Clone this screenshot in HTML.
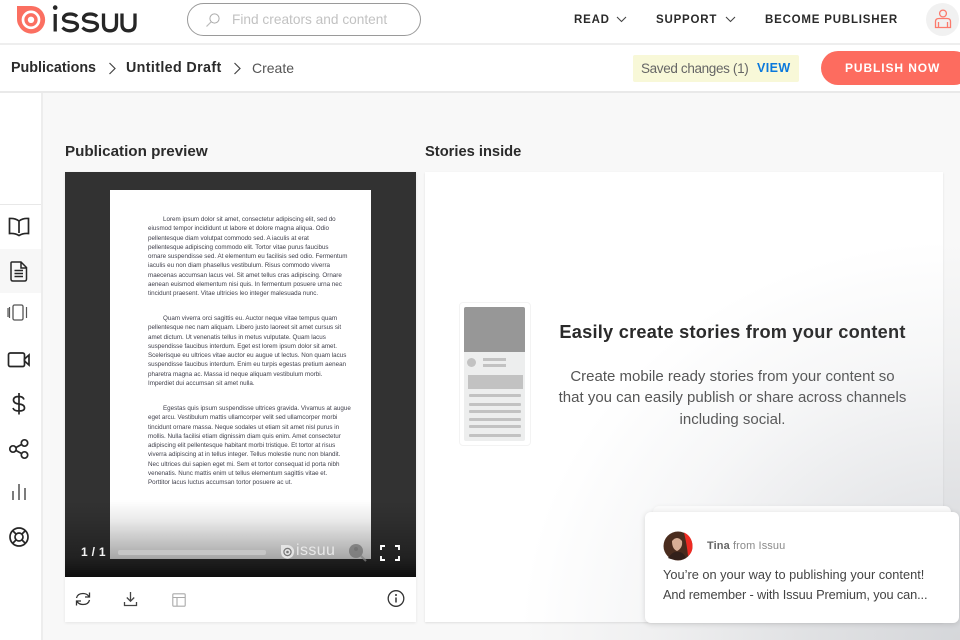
<!DOCTYPE html>
<html><head><meta charset="utf-8"><style>
html,body{margin:0;padding:0}
body{width:960px;height:640px;position:relative;overflow:hidden;background:#f8f8f8;font-family:"Liberation Sans",sans-serif;color:#222}
.a{position:absolute;white-space:nowrap}
.box{position:absolute}
svg{position:absolute;overflow:visible}
.d{position:absolute;white-space:nowrap;font-family:"Liberation Sans",sans-serif;font-size:6.25px;line-height:9px;color:#3e3e4a}
.n{font-size:11.5px;line-height:14px;font-weight:bold;letter-spacing:.8px;color:#2a2a2a;top:13px}
.l{position:absolute;left:469px;width:52px;height:3px;background:#c2c2c2;border-radius:1px}
</style></head><body>

<!-- header -->
<div class="box" style="left:0;top:0;width:960px;height:43px;background:#fff;border-bottom:2px solid #eeeeee"></div>
<div class="box" style="left:0;top:45px;width:960px;height:46px;background:#fff;border-bottom:2px solid #e9e9e9"></div>

<svg style="left:16px;top:5px" width="30" height="29" viewBox="0 0 30 29">
<path d="M1 1H15A13.800 13.800 0 1 1 3 21Q1 18 1 14Z" fill="#fb6f61"/>
<circle cx="15" cy="14.800" r="8" fill="none" stroke="#fff" stroke-width="2.700"/>
<circle cx="15" cy="14.800" r="3.200" fill="#fff"/>
</svg>
<svg style="left:52px;top:4px" width="88" height="30" viewBox="0 0 88 30" fill="none" stroke="#262626" stroke-width="3.300">
<circle cx="3.200" cy="3.600" r="2.300" fill="#262626" stroke="none"/>
<path d="M3.200 10V27.500"/>
<path d="M25 12.500C23 10.500 20 10 18 10C14 10 11.500 12 11.500 14.500C11.500 20 25.500 16 25.500 22C25.500 25 22 26.800 18 26.800C15 26.800 12.500 25.500 10.500 23.500"/>
<path d="M45 12.500C43 10.500 40 10 38 10C34 10 31.500 12 31.500 14.500C31.500 20 45.500 16 45.500 22C45.500 25 42 26.800 38 26.800C35 26.800 32.500 25.500 30.500 23.500"/>
<path d="M51.500 9.500V20C51.500 24.800 54 26.800 58 26.800C62 26.800 64.500 24.800 64.500 20V9.500"/>
<path d="M70 9.500V20C70 24.800 72.500 26.800 76.500 26.800C80.500 26.800 83 24.800 83 20V9.500"/>
</svg>

<div class="box" style="left:187px;top:3px;width:232px;height:31px;border:1.300px solid #9a9a9a;border-radius:17px;background:#fff"></div>
<svg style="left:205px;top:12px" width="16" height="16" viewBox="0 0 16 16"><circle cx="9.500" cy="6.500" r="4.600" fill="none" stroke="#aaa" stroke-width="1"/><path d="M6 10L1.500 14.500" stroke="#bbb" stroke-width="1.200"/></svg>
<div class="a" style="left:232px;top:12px;font-size:13.700px;line-height:16px;color:#c2c2c2">Find creators and content</div>

<div class="a n" style="left:574px">READ</div>
<svg style="left:616px;top:16px" width="11" height="7"><path d="M1 1L5.500 5.500L10 1" fill="none" stroke="#444" stroke-width="1.100"/></svg>
<div class="a n" style="left:656px">SUPPORT</div>
<svg style="left:725px;top:16px" width="11" height="7"><path d="M1 1L5.500 5.500L10 1" fill="none" stroke="#444" stroke-width="1.100"/></svg>
<div class="a n" style="left:765px">BECOME PUBLISHER</div>
<div class="box" style="left:926px;top:3px;width:33px;height:33px;border-radius:50%;background:#f1f1f1"></div>
<svg style="left:934px;top:9px" width="18" height="20" viewBox="0 0 18 20"><circle cx="9" cy="4.500" r="3.400" fill="none" stroke="#fb7a6c" stroke-width="1.300"/><path d="M1.500 18.500V12.500Q1.500 9.500 5 9.500H13Q16.500 9.500 16.500 12.500V18.500ZM4.500 18.500V13M13.500 18.500V13" fill="none" stroke="#fb7a6c" stroke-width="1.300"/></svg>

<!-- breadcrumb -->
<div class="a" style="left:11px;top:59px;font-size:14.300px;line-height:18px;font-weight:bold;color:#2b2b2b">Publications</div>
<svg style="left:108px;top:62px" width="9" height="13"><path d="M1.500 1L7 6.500L1.500 12" fill="none" stroke="#444" stroke-width="1.200"/></svg>
<div class="a" style="left:126px;top:59px;font-size:14.300px;line-height:18px;font-weight:bold;letter-spacing:.36px;color:#2b2b2b">Untitled Draft</div>
<svg style="left:233px;top:62px" width="9" height="13"><path d="M1.500 1L7 6.500L1.500 12" fill="none" stroke="#444" stroke-width="1.200"/></svg>
<div class="a" style="left:252px;top:59px;font-size:14px;line-height:18px;color:#555">Create</div>

<div class="box" style="left:633px;top:55px;width:166px;height:27px;background:#f8f8d8;border-radius:2px"></div>
<div class="a" style="left:641px;top:60px;font-size:13.500px;line-height:17px;letter-spacing:-.35px;color:#666">Saved changes (1)</div>
<div class="a" style="left:757px;top:60px;font-size:12.500px;line-height:16px;font-weight:bold;letter-spacing:.4px;color:#0a78dc">VIEW</div>
<div class="box" style="left:821px;top:51px;width:150px;height:34px;border-radius:17px;background:#fd6c5f"></div>
<div class="a" style="left:845px;top:60px;font-size:12px;line-height:16px;font-weight:bold;letter-spacing:.9px;color:#fff">PUBLISH NOW</div>

<!-- sidebar -->
<div class="box" style="left:0;top:93px;width:41px;height:547px;background:#fff;border-right:2px solid #ededed"></div>
<div class="box" style="left:0;top:204px;width:41px;height:1px;background:#e8e8e8"></div>
<div class="box" style="left:0;top:249px;width:41px;height:44px;background:#f7f7f7"></div>
<svg style="left:0;top:200px" width="42" height="360" viewBox="0 0 42 360" fill="none" stroke="#262626" stroke-width="1.700">
<path d="M19 33V21Q15 18 9.500 18.500V33.500Q15 33 19 35.500Q23 33 28.500 33.500V18.500Q23 18 19 21"/>
<path d="M12 62H21L26.500 67.500V79Q26.500 81 24.500 81H13Q11 81 11 79V63Q11 62 12 62ZM21 62V68H26.500M14.500 70.500H23M14.500 73.500H23M14.500 76.500H23" stroke-width="1.500"/>
<rect x="13" y="105" width="10" height="15" rx="1.500" stroke="#555" stroke-width="1.300"/><path d="M9.500 107V118M8 108V117M26.500 107V118" stroke="#555" stroke-width="1.200"/>
<rect x="8.500" y="153" width="16" height="13.500" rx="1.800"/><path d="M24.500 159L29 155V165L24.500 161Z"/>
<path d="M24 199.500Q23 196.500 19 196.500Q13.500 196.500 13.500 200Q13.500 203.500 19 204Q24.500 204.500 24.500 208Q24.500 211 19 211Q14 211 13 208M19 193V214.500"/>
<circle cx="24.500" cy="243" r="3.200"/><circle cx="13" cy="249" r="3.200"/><circle cx="24.500" cy="255" r="3.200"/><path d="M16 247.500L21.500 244.500M16 250.500L21.500 253.500"/>
<path d="M13 300V291M19 300V284M25 300V288" stroke="#444" stroke-width="1.400"/>
<circle cx="19" cy="337" r="9"/><circle cx="19" cy="337" r="4"/><path d="M12.500 330.500L16 334M25.500 330.500L22 334M12.500 343.500L16 340M25.500 343.500L22 340"/>
</svg>

<!-- Preview -->
<div class="a" style="left:65px;top:143px;font-size:15.200px;line-height:18px;font-weight:bold;color:#2b2b2b">Publication preview</div>
<div class="box" style="left:65px;top:172px;width:351px;height:450px;background:#fff;box-shadow:0 1px 3px rgba(0,0,0,.08)"></div>
<div class="box" style="left:65px;top:172px;width:351px;height:405px;background:#323232"></div>
<div class="box" style="left:110px;top:190px;width:261px;height:369px;background:#fff;border:0"></div>

<div class="d" style="left:163px;top:215px">Lorem ipsum dolor sit amet, consectetur adipiscing elit, sed do</div>
<div class="d" style="left:148px;top:224.200px">eiusmod tempor incididunt ut labore et dolore magna aliqua. Odio</div>
<div class="d" style="left:148px;top:233.500px">pellentesque diam volutpat commodo sed. A iaculis at erat</div>
<div class="d" style="left:148px;top:242.700px">pellentesque adipiscing commodo elit. Tortor vitae purus faucibus</div>
<div class="d" style="left:148px;top:252px">ornare suspendisse sed. At elementum eu facilisis sed odio. Fermentum</div>
<div class="d" style="left:148px;top:261.200px">iaculis eu non diam phasellus vestibulum. Risus commodo viverra</div>
<div class="d" style="left:148px;top:270.500px">maecenas accumsan lacus vel. Sit amet tellus cras adipiscing. Ornare</div>
<div class="d" style="left:148px;top:279.700px">aenean euismod elementum nisi quis. In fermentum posuere urna nec</div>
<div class="d" style="left:148px;top:289px">tincidunt praesent. Vitae ultricies leo integer malesuada nunc.</div>

<div class="d" style="left:163px;top:314px">Quam viverra orci sagittis eu. Auctor neque vitae tempus quam</div>
<div class="d" style="left:148px;top:323.300px">pellentesque nec nam aliquam. Libero justo laoreet sit amet cursus sit</div>
<div class="d" style="left:148px;top:332.500px">amet dictum. Ut venenatis tellus in metus vulputate. Quam lacus</div>
<div class="d" style="left:148px;top:341.800px">suspendisse faucibus interdum. Eget est lorem ipsum dolor sit amet.</div>
<div class="d" style="left:148px;top:351px">Scelerisque eu ultrices vitae auctor eu augue ut lectus. Non quam lacus</div>
<div class="d" style="left:148px;top:360.300px">suspendisse faucibus interdum. Enim eu turpis egestas pretium aenean</div>
<div class="d" style="left:148px;top:369.500px">pharetra magna ac. Massa id neque aliquam vestibulum morbi.</div>
<div class="d" style="left:148px;top:378.800px">Imperdiet dui accumsan sit amet nulla.</div>

<div class="d" style="left:163px;top:404px">Egestas quis ipsum suspendisse ultrices gravida. Vivamus at augue</div>
<div class="d" style="left:148px;top:413.200px">eget arcu. Vestibulum mattis ullamcorper velit sed ullamcorper morbi</div>
<div class="d" style="left:148px;top:422.500px">tincidunt ornare massa. Neque sodales ut etiam sit amet nisl purus in</div>
<div class="d" style="left:148px;top:431.700px">mollis. Nulla facilisi etiam dignissim diam quis enim. Amet consectetur</div>
<div class="d" style="left:148px;top:441px">adipiscing elit pellentesque habitant morbi tristique. Et tortor at risus</div>
<div class="d" style="left:148px;top:450.200px">viverra adipiscing at in tellus integer. Tellus molestie nunc non blandit.</div>
<div class="d" style="left:148px;top:459.500px">Nec ultrices dui sapien eget mi. Sem et tortor consequat id porta nibh</div>
<div class="d" style="left:148px;top:468.700px">venenatis. Nunc mattis enim ut tellus elementum sagittis vitae et.</div>
<div class="d" style="left:148px;top:478px">Porttitor lacus luctus accumsan tortor posuere ac ut.</div>

<div class="box" style="left:65px;top:500px;width:351px;height:77px;background:linear-gradient(to bottom,rgba(0,0,0,0) 0%,rgba(0,0,0,.08) 25%,rgba(0,0,0,.34) 75%,rgba(0,0,0,.72) 100%)"></div>
<div class="a" style="left:81px;top:545px;font-size:12px;line-height:15px;font-weight:bold;letter-spacing:.3px;color:#f4f4f4">1 / 1</div>
<div class="box" style="left:118px;top:550px;width:148px;height:5px;border-radius:2px;background:#c6c6c6"></div>
<svg style="left:280px;top:544px" width="16" height="16" viewBox="0 0 16 16"><path d="M1 1H7.500A6.800 6.800 0 1 1 2 12Q1 10 1 8Z" fill="#e4e4e4"/><circle cx="7.500" cy="8" r="3.600" fill="none" stroke="#777" stroke-width="1.200"/><circle cx="7.500" cy="8" r="1.300" fill="#777"/></svg>
<div class="a" style="left:296px;top:541px;font-size:16px;line-height:20px;letter-spacing:.4px;color:#e8e8e8">issuu</div>
<svg style="left:348px;top:543px" width="20" height="20" viewBox="0 0 20 20" opacity=".75"><circle cx="8" cy="8" r="7" fill="#707070"/><circle cx="8" cy="6" r="2" fill="#5f5f5f"/><path d="M13 13L18 18" stroke="#808080" stroke-width="2"/></svg>
<svg style="left:380px;top:545px" width="20" height="16" viewBox="0 0 20 16" fill="none" stroke="#fff" stroke-width="1.900"><path d="M1 5V1H5M15 1H19V5M1 11V15H5M15 15H19V11"/></svg>

<svg style="left:75px;top:591px" width="16" height="16" viewBox="0 0 16 16" fill="none" stroke="#333" stroke-width="1.300"><path d="M1.500 7Q2.500 2.500 8 2.500Q12 2.500 14 5.500M14.500 1.500V6H10M14.500 9Q13.500 13.500 8 13.500Q4 13.500 2 10.500M1.500 14.500V10H6"/></svg>
<svg style="left:123px;top:591px" width="15" height="16" viewBox="0 0 15 16" fill="none" stroke="#444" stroke-width="1.300"><path d="M7.500 1V10M3.800 6.500L7.500 10.200L11.200 6.500M1.500 11V14.500H13.500V11"/></svg>
<svg style="left:172px;top:593px" width="14" height="14" viewBox="0 0 14 14" fill="none" stroke="#aaa" stroke-width="1.100"><rect x=".8" y=".8" width="12.400" height="12.400" rx="1"/><path d="M.8 4.500H13.200M5 4.500V13.200"/></svg>
<svg style="left:387px;top:590px" width="18" height="18" viewBox="0 0 18 18"><circle cx="9" cy="8.500" r="7.800" fill="none" stroke="#333" stroke-width="1.300"/><path d="M9 7.500V12.500" stroke="#333" stroke-width="1.500"/><circle cx="9" cy="5" r="1" fill="#333"/></svg>

<!-- Stories -->
<div class="a" style="left:425px;top:143px;font-size:14.700px;line-height:18px;font-weight:bold;color:#2b2b2b">Stories inside</div>
<div class="box" style="left:425px;top:172px;width:518px;height:450px;background:#fff;box-shadow:0 1px 2px rgba(0,0,0,.1)"></div>

<div class="box" style="left:459px;top:302px;width:72px;height:144px;box-sizing:border-box;border:1.500px solid #f3f3f3;border-radius:4px;background:#fff"></div>
<div class="box" style="left:464px;top:307px;width:61px;height:134px;background:#edeeee;border-radius:2px"></div>
<div class="box" style="left:464px;top:307px;width:61px;height:45px;background:#979797;border-radius:2px 2px 0 0"></div>
<div class="box" style="left:467px;top:358px;width:9px;height:9px;border-radius:50%;background:#c2c2c2"></div>
<div class="box" style="left:483px;top:358px;width:23px;height:3px;background:#c2c2c2"></div>
<div class="box" style="left:483px;top:364px;width:23px;height:3px;background:#c2c2c2"></div>
<div class="box" style="left:468px;top:375px;width:55px;height:14px;background:#c2c2c2"></div>
<div class="l" style="top:394px"></div>
<div class="l" style="top:403px"></div>
<div class="l" style="top:410px"></div>
<div class="l" style="top:418px"></div>
<div class="l" style="top:425px"></div>
<div class="l" style="top:434px"></div>

<div class="a" style="left:425px;width:615px;text-align:center;top:321px;font-size:18.200px;line-height:22px;font-weight:bold;letter-spacing:.25px;color:#2a2a2a">Easily create stories from your content</div>
<div class="a" style="left:425px;width:615px;text-align:center;top:366px;font-size:15px;line-height:21.400px;color:#555">Create mobile ready stories from your content so<br>that you can easily publish or share across channels<br>including social.</div>

<!-- corner gradient -->
<div class="box" style="left:425px;top:172px;width:535px;height:468px;background:radial-gradient(ellipse 440px 400px at 100% 100%,rgba(140,145,155,.32) 0%,rgba(140,145,155,.22) 35%,rgba(140,145,155,.08) 70%,rgba(140,145,155,0) 100%)"></div>

<!-- chat -->
<div class="box" style="left:653px;top:506px;width:298px;height:20px;background:#fafafa;border-radius:6px;box-shadow:0 0 4px rgba(0,0,0,.05)"></div>
<div class="box" style="left:645px;top:512px;width:314px;height:111px;background:#fff;border-radius:6px;box-shadow:0 1px 6px rgba(0,0,0,.14)"></div>
<svg style="left:663px;top:531px" width="30" height="30" viewBox="0 0 30 30">
<circle cx="15" cy="15" r="14.500" fill="#4a2c1e"/>
<path d="M21 1.500Q29 5 29.500 15Q29.500 22 25 25Q24 14 21 1.500Z" fill="#ee2a22"/>
<path d="M9 10Q14 4 19 10Q20 17 14 20Q9 18 9 10Z" fill="#d8ae96"/>
<path d="M5 27Q10 20 14 21Q20 20 23 27Q15 31 5 27Z" fill="#33201a"/>
</svg>
<div class="a" style="left:707px;top:539px;font-size:11px;line-height:14px;color:#8a8a8a;letter-spacing:.1px"><b style="color:#666">Tina</b> from Issuu</div>
<div class="a" style="left:663px;top:567px;font-size:12.800px;line-height:16px;color:#444">You’re on your way to publishing your content!</div>
<div class="a" style="left:663px;top:587px;font-size:12.800px;line-height:16px;letter-spacing:-.13px;color:#444">And remember - with Issuu Premium, you can...</div>

</body></html>
